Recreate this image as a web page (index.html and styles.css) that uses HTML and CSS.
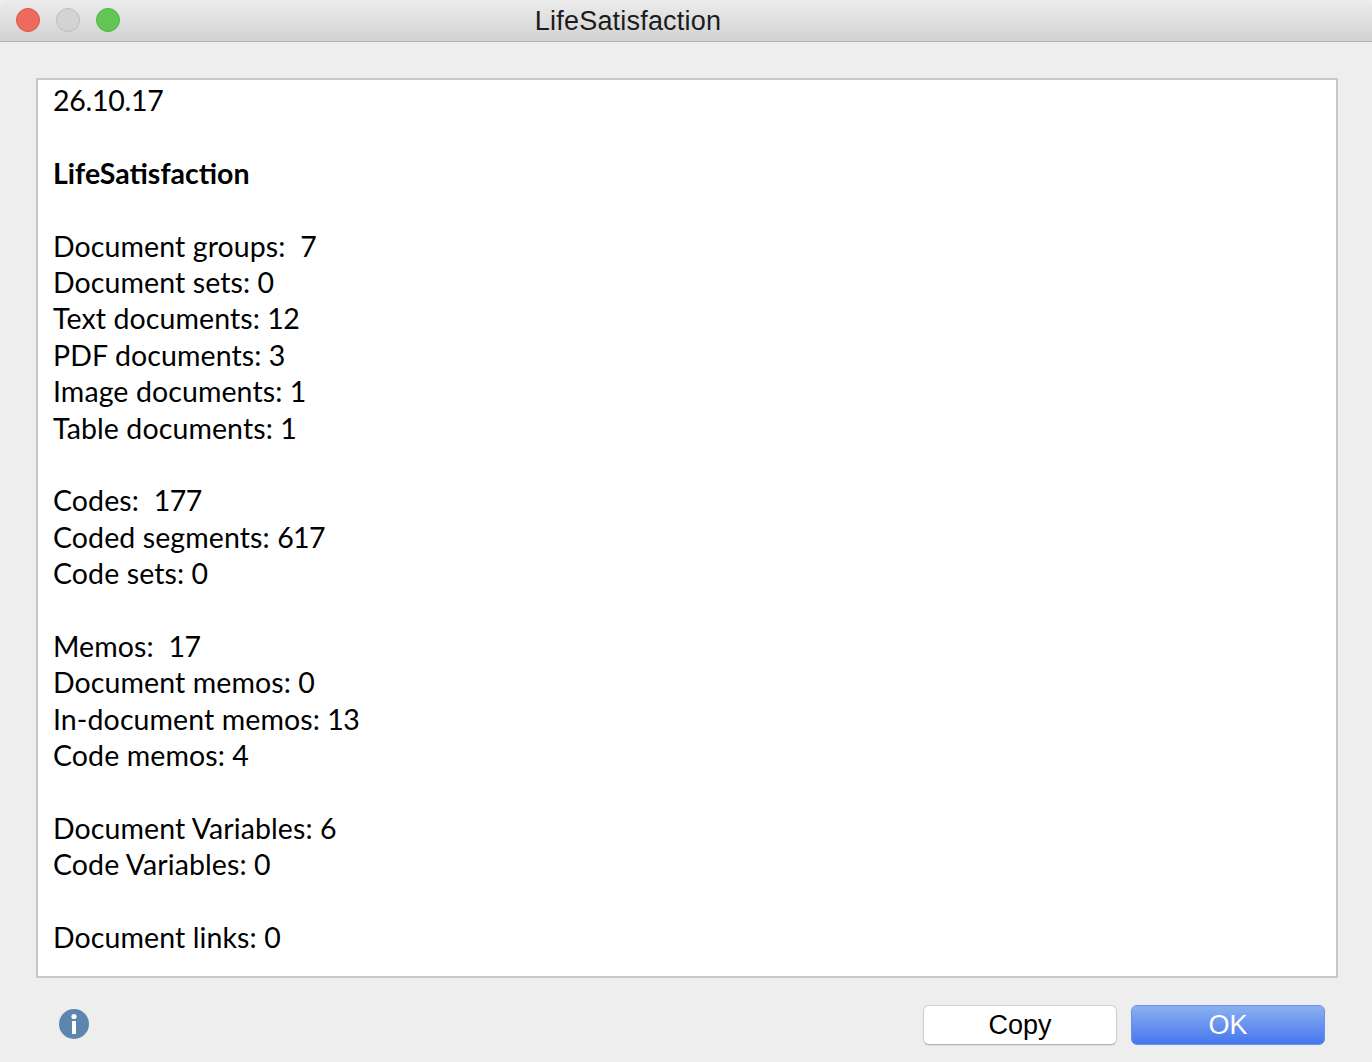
FILE: index.html
```html
<!DOCTYPE html>
<html lang="en">
<head>
<meta charset="utf-8">
<title>LifeSatisfaction</title>
<link rel="stylesheet" href="styles.css">
</head>
<body>
<div class="window">
  <header class="titlebar">
    <div class="lights">
      <span class="light red"></span>
      <span class="light grey"></span>
      <span class="light green"></span>
    </div>
    <div class="title">LifeSatisfaction</div>
  </header>
  <main class="content">
    <div class="panel">
      <div class="report">
        <p class="date">26.10.17</p>
        <p>&nbsp;</p>
        <p class="bold">LifeSatisfaction</p>
        <p>&nbsp;</p>
        <p>Document groups:  <span class="n">7</span></p>
        <p>Document sets: <span class="n">0</span></p>
        <p>Text documents: <span class="n">12</span></p>
        <p>PDF documents: <span class="n">3</span></p>
        <p>Image documents: <span class="n">1</span></p>
        <p>Table documents: <span class="n">1</span></p>
        <p>&nbsp;</p>
        <p>Codes:  <span class="n">177</span></p>
        <p>Coded segments: <span class="n">617</span></p>
        <p>Code sets: <span class="n">0</span></p>
        <p>&nbsp;</p>
        <p>Memos:  <span class="n">17</span></p>
        <p>Document memos: <span class="n">0</span></p>
        <p>In-document memos: <span class="n">13</span></p>
        <p>Code memos: <span class="n">4</span></p>
        <p>&nbsp;</p>
        <p>Document Variables: <span class="n">6</span></p>
        <p>Code Variables: <span class="n">0</span></p>
        <p>&nbsp;</p>
        <p>Document links: <span class="n">0</span></p>
      </div>
    </div>
    <footer class="footer">
      <svg class="info" width="30" height="30" viewBox="0 0 30 30" aria-label="Info">
        <circle cx="15" cy="15" r="15" fill="#5c86ad"/>
        <circle cx="15" cy="7.5" r="2.6" fill="#fff"/>
        <rect x="13" y="12" width="4" height="13" fill="#fff"/>
      </svg>
      <div class="buttons">
        <button class="btn">Copy</button>
        <button class="btn primary">OK</button>
      </div>
    </footer>
  </main>
</div>
</body>
</html>
```
FILE: styles.css
```css
* { box-sizing: border-box; }
html, body { margin: 0; padding: 0; }
body { width: 1372px; height: 1062px; background: #eeeeee; overflow: hidden; }
.window { display: flex; flex-direction: column; height: 1062px; }
.titlebar {
  display: flex;
  align-items: center;
  justify-content: center;
  height: 42px;
  flex: none;
  position: relative;
  background: linear-gradient(#ececec, #d2d2d2);
  border-bottom: 1px solid #b4b4b4;
  border-top-left-radius: 8px;
  border-top-right-radius: 8px;
}
.lights { position: absolute; left: 16px; top: 8px; display: flex; gap: 16px; }
.light { width: 24px; height: 24px; border-radius: 50%; border: 1px solid; }
.red { background: #ee6a5f; border-color: #d9574c; }
.grey { background: #d3d3d3; border-color: #bdbdbd; }
.green { background: #62c654; border-color: #54b147; }
.title {
  font-family: "Liberation Sans", Arial, sans-serif;
  font-size: 27px;
  line-height: 40px;
  color: #1c1c1c;
  letter-spacing: 0.2px;
  margin-left: -116px;
  margin-top: 1px;
}
.content { flex: 1; display: flex; flex-direction: column; padding: 36px 34px 0 36px; }
.panel {
  height: 900px;
  flex: none;
  background: #fff;
  border: 2px solid #c8c8c8;
  padding: 2px 0 0 15px;
}
.report {
  font-family: Lato, "Open Sans", sans-serif;
  font-size: 28.5px;
  line-height: 36.4px;
  letter-spacing: 0.1px;
  color: #000;
}
.report p { margin: 0; height: 36.4px; white-space: pre; }
.report .n { letter-spacing: -0.6px; }
.report .date { letter-spacing: -0.25px; }
.report .bold { font-weight: 700; letter-spacing: 0; }
.footer { display: flex; align-items: center; justify-content: space-between; padding: 27px 13px 0 23px; }
.info { display: block; margin-top: -2px; }
.buttons { display: flex; gap: 14px; }
.btn {
  width: 194px;
  height: 40px;
  padding: 0;
  font-family: "Liberation Sans", Arial, sans-serif;
  font-size: 27px;
  color: #000;
  background: #fff;
  border: 1px solid #cfcfcf;
  border-bottom-color: #b5b5b5;
  border-radius: 6px;
  box-shadow: 0 1px 1px rgba(0, 0, 0, 0.08);
}
.primary {
  color: #fff;
  background: linear-gradient(#8bb0f0, #4676ee);
  border: 1px solid #6a90ea;
  box-shadow: none;
}
```
